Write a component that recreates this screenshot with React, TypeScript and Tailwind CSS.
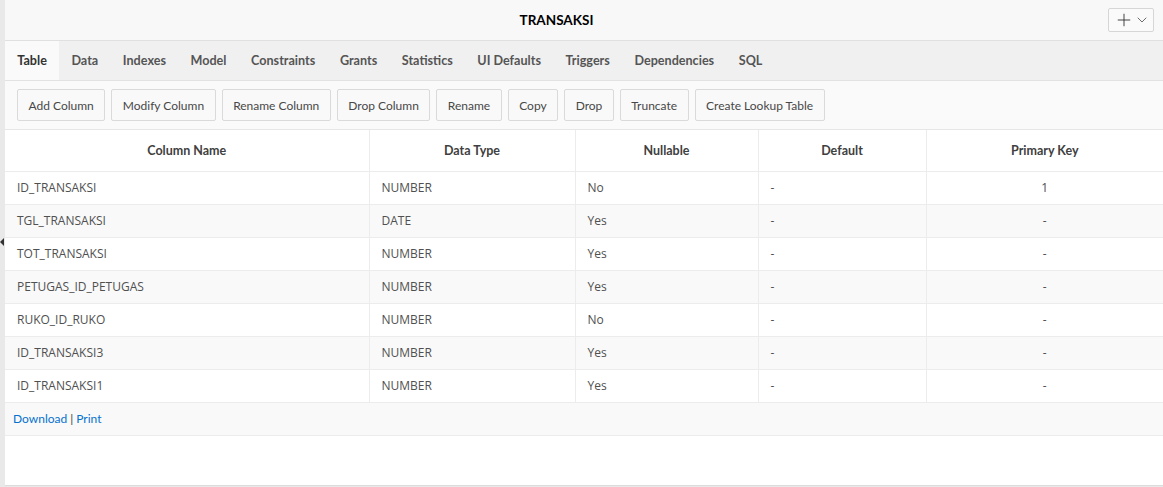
import { ChevronDown, Plus } from 'lucide-react';

interface ColumnRow {
  name: string;
  type: string;
  nullable: string;
  def: string;
  pk: string;
}

const tabs = [
  'Table',
  'Data',
  'Indexes',
  'Model',
  'Constraints',
  'Grants',
  'Statistics',
  'UI Defaults',
  'Triggers',
  'Dependencies',
  'SQL',
];

const actions = [
  'Add Column',
  'Modify Column',
  'Rename Column',
  'Drop Column',
  'Rename',
  'Copy',
  'Drop',
  'Truncate',
  'Create Lookup Table',
];

const rows: ColumnRow[] = [
  { name: 'ID_TRANSAKSI', type: 'NUMBER', nullable: 'No', def: '-', pk: '1' },
  { name: 'TGL_TRANSAKSI', type: 'DATE', nullable: 'Yes', def: '-', pk: '-' },
  { name: 'TOT_TRANSAKSI', type: 'NUMBER', nullable: 'Yes', def: '-', pk: '-' },
  { name: 'PETUGAS_ID_PETUGAS', type: 'NUMBER', nullable: 'Yes', def: '-', pk: '-' },
  { name: 'RUKO_ID_RUKO', type: 'NUMBER', nullable: 'No', def: '-', pk: '-' },
  { name: 'ID_TRANSAKSI3', type: 'NUMBER', nullable: 'Yes', def: '-', pk: '-' },
  { name: 'ID_TRANSAKSI1', type: 'NUMBER', nullable: 'Yes', def: '-', pk: '-' },
];

const cell = 'border-r border-[#ececec] px-[12px] font-[Open_Sans] text-[12px] text-[#505050]';

export default function App() {
  return (
    <div
      className="flex h-[487px] w-[1163px] bg-[#e9e9e9] text-[#404040]"
      style={{ fontFamily: 'Lato, "Open Sans", "Liberation Sans", sans-serif' }}
    >
      {/* splitter strip */}
      <div className="relative w-[5px] shrink-0">
        <div className="absolute left-0 top-[238px] h-0 w-0 border-y-[4px] border-r-[4px] border-y-transparent border-r-[#333]"></div>
      </div>

      <div className="flex h-[486px] flex-1 flex-col border-b border-[#dcdcdc] bg-white">
        {/* title bar */}
        <div className="flex h-[41px] shrink-0 items-center border-b border-[#e0e0e0] bg-[#f8f8f8] pr-[9px]">
          <h1 className="flex-1 text-center text-[13.5px] font-bold text-black">TRANSAKSI</h1>
          <button className="flex h-[24px] w-[46px] items-center justify-center gap-0 rounded-[2px] border border-[#d6d6d6] bg-[#fafafa] pl-[2px]">
            <Plus size={20} strokeWidth={1.1} className="text-[#333]" />
            <ChevronDown size={16} strokeWidth={1.3} className="text-[#555]" />
          </button>
        </div>

        {/* tabs */}
        <div className="flex h-[40px] shrink-0 items-stretch border-b border-[#e2e2e2] bg-[#f0f0f0]">
          {tabs.map((tab, i) => (
            <div
              key={tab}
              className={
                i === 0
                  ? 'flex items-center bg-[#fafafa] px-[12.3px] pt-[2px] text-[12.6px] font-bold text-[#333]'
                  : 'flex items-center px-[12.3px] pt-[2px] text-[12.6px] font-bold text-[#555]'
              }
            >
              {tab}
            </div>
          ))}
        </div>

        {/* actions */}
        <div className="flex h-[49px] shrink-0 items-center gap-[6px] border-b border-[#e6e6e6] bg-[#fafafa] px-[12px]">
          {actions.map((a) => (
            <button
              key={a}
              className="h-[32px] rounded-[2px] border border-[#dadada] bg-[#f9f9f9] px-[10.5px] pt-[2px] text-[12px] text-[#484848]"
            >
              {a}
            </button>
          ))}
        </div>

        {/* column table */}
        <table className="w-full table-fixed border-collapse">
          <colgroup>
            <col className="w-[364px]" />
            <col className="w-[206px]" />
            <col className="w-[183px]" />
            <col className="w-[168px]" />
            <col />
          </colgroup>
          <thead>
            <tr className="h-[41px] border-b border-[#ececec] text-[12.5px]">
              <th className="border-r border-[#ececec] pt-[3px] font-bold text-[#404040]">Column Name</th>
              <th className="border-r border-[#ececec] pt-[3px] font-bold text-[#404040]">Data Type</th>
              <th className="border-r border-[#ececec] pt-[3px] font-bold text-[#404040]">Nullable</th>
              <th className="border-r border-[#ececec] pt-[3px] font-bold text-[#404040]">Default</th>
              <th className="pt-[3px] font-bold text-[#404040]">Primary Key</th>
            </tr>
          </thead>
          <tbody>
            {rows.map((r, i) => (
              <tr
                key={r.name}
                className={
                  i % 2 === 1
                    ? 'h-[33px] border-b border-[#ececec] bg-[#f9f9f9]'
                    : 'h-[33px] border-b border-[#ececec] bg-white'
                }
              >
                <td className={cell}>{r.name}</td>
                <td className={cell}>{r.type}</td>
                <td className={cell}>{r.nullable}</td>
                <td className={cell}>{r.def}</td>
                <td className="px-[12px] text-center font-[Open_Sans] text-[12px] text-[#505050]">{r.pk}</td>
              </tr>
            ))}
          </tbody>
        </table>

        {/* footer links */}
        <div className="flex h-[33px] shrink-0 items-center border-b border-[#ececec] bg-[#f9f9f9] px-[8px] pt-[1px] text-[12px]">
          <a className="text-[#0572ce]">Download</a>
          <span className="mx-[3px] text-[#404040]">|</span>
          <a className="text-[#0572ce]">Print</a>
        </div>
      </div>
    </div>
  );
}
